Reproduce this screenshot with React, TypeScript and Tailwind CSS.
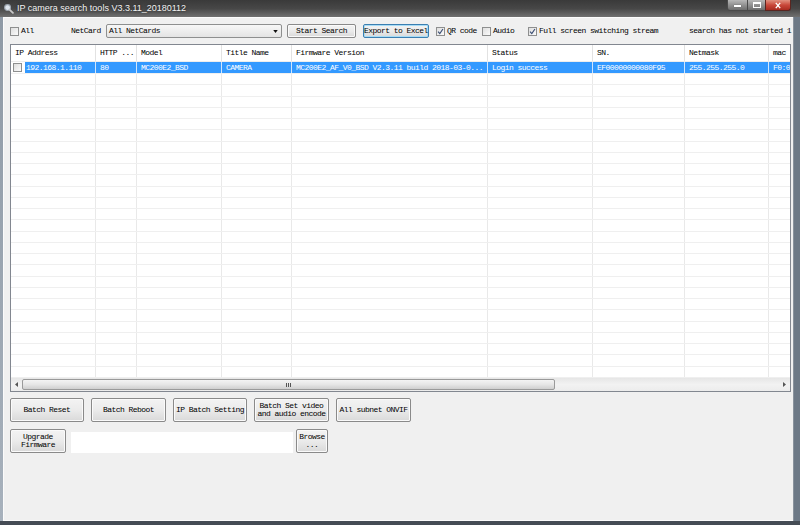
import React from "react";

const COLS = [
  { label: "IP Address", w: "w-[85px]" },
  { label: "HTTP ...", w: "w-[41px]" },
  { label: "Model", w: "w-[85px]" },
  { label: "Title Name", w: "w-[70px]" },
  { label: "Firmware Version", w: "w-[196px]" },
  { label: "Status", w: "w-[105px]" },
  { label: "SN.", w: "w-[92px]" },
  { label: "Netmask", w: "w-[84px]" },
  { label: "mac", w: "w-[21px]" },
];

const ROW = [
  "192.168.1.110",
  "80",
  "MC200E2_BSD",
  "CAMERA",
  "MC200E2_AF_V0_BSD V2.3.11 build 2018-03-0...",
  "Login success",
  "EF00000000080F95",
  "255.255.255.0",
  "F0:0",
];

const EMPTY_ROWS = Array.from({ length: 28 }, (_, i) => i);

function Check({ checked }: { checked?: boolean }) {
  return (
    <span className="flex h-[9px] w-[9px] shrink-0 items-center justify-center border border-[#8e8f8f] bg-gradient-to-br from-[#dedede] to-[#fbfbfb]">
      {checked && (
        <svg viewBox="0 0 8 8" className="h-[7px] w-[7px]">
          <path d="M1.2 4.2 L3.2 6.4 L6.8 1.2" fill="none" stroke="#3b4e74" strokeWidth="1.3" />
        </svg>
      )}
    </span>
  );
}

function Btn({
  className,
  children,
  focused,
}: {
  className: string;
  children: React.ReactNode;
  focused?: boolean;
}) {
  return (
    <div
      className={`flex shrink-0 flex-col items-center justify-center rounded-[2px] border bg-gradient-to-b from-[#f3f3f3] via-[#ebebeb] to-[#d9d9d9] text-center leading-[8px] text-black ${
        focused
          ? "border-[#3c7fb1] shadow-[inset_0_0_0_1px_#a7dcf6]"
          : "border-[#8a8a8a] shadow-[inset_0_0_0_1px_#fafafa]"
      } ${className}`}
    >
      {children}
    </div>
  );
}

function TitleBar() {
  return (
    <div className="flex h-[17px] shrink-0 items-start bg-gradient-to-b from-[#3a3a3a] via-[#474747] to-[#707070]">
      <svg viewBox="0 0 12 12" className="ml-[3px] mt-[3px] h-[11px] w-[11px] shrink-0">
        <circle cx="5" cy="5" r="3.2" fill="#dfe6ee" stroke="#9aa3ad" strokeWidth="1.2" />
        <path d="M7.4 7.4 L10.8 10.8" stroke="#c9c9c9" strokeWidth="2" strokeLinecap="round" />
      </svg>
      <span className="ml-[3px] mt-[2px] font-['Liberation_Sans',sans-serif] text-[9px] leading-[12px] tracking-normal text-[#f2f2f2] [text-shadow:0_0_3px_rgba(0,0,0,0.6)]">
        IP camera search tools V3.3.11_20180112
      </span>
      <div className="ml-auto mr-[9px] flex h-[11px]">
        <div className="flex w-[21px] items-center justify-center rounded-bl-[3px] border border-t-0 border-[#4a4a4a] bg-gradient-to-b from-[#b8b8b8] to-[#6e6e6e]">
          <span className="mt-[2px] h-[2px] w-[7px] bg-white shadow-[0_0_1px_#333]" />
        </div>
        <div className="flex w-[17px] items-center justify-center border-b border-[#4a4a4a] bg-gradient-to-b from-[#b8b8b8] to-[#6e6e6e]">
          <span className="h-[6px] w-[8px] border border-t-2 border-white" />
        </div>
        <div className="flex w-[26px] items-center justify-center rounded-br-[3px] border border-t-0 border-[#5a2520] bg-gradient-to-b from-[#e0907f] via-[#c9483a] to-[#a92b1f]">
          <svg viewBox="0 0 8 8" className="h-[7px] w-[8px]">
            <path d="M1.5 1 L6.5 7 M6.5 1 L1.5 7" stroke="white" strokeWidth="1.6" />
          </svg>
        </div>
      </div>
    </div>
  );
}

function Toolbar() {
  return (
    <div className="mt-[6px] flex h-[14px] shrink-0 items-center whitespace-nowrap">
      <div className="ml-[6px]">
        <Check />
      </div>
      <span className="ml-[2px] w-[50px]">All</span>
      <span className="w-[35px]">NetCard</span>
      <div className="flex h-[14px] w-[176px] shrink-0 items-center rounded-[2px] border border-[#8e8f8f] bg-gradient-to-b from-[#f7f7f7] to-[#e4e4e4] pl-[2px]">
        <span>All NetCards</span>
        <svg viewBox="0 0 6 4" className="ml-auto mr-[3px] h-[3px] w-[5px]">
          <path d="M0 0 L6 0 L3 4 Z" fill="#111" />
        </svg>
      </div>
      <Btn className="ml-[5px] h-[14px] w-[69px]">Start Search</Btn>
      <Btn focused className="ml-[7px] h-[14px] w-[66px]">
        Export to Excel
      </Btn>
      <div className="ml-[7px]">
        <Check checked />
      </div>
      <span className="ml-[2px] w-[35px]">QR code</span>
      <Check />
      <span className="ml-[2px] w-[35px]">Audio</span>
      <Check checked />
      <span className="ml-[2px] w-[150px]">Full screen switching stream</span>
      <span>search has not started 1</span>
    </div>
  );
}

function Grid() {
  return (
    <div className="ml-[6px] mt-[6px] flex h-[348px] w-[781px] shrink-0 flex-col overflow-hidden border border-[#828790] bg-white">
      <div className="flex h-[17px] shrink-0 border-b border-[#ededed]">
        {COLS.map((c, i) => (
          <div
            key={c.label}
            className={`flex shrink-0 items-center pl-[4px] whitespace-nowrap ${c.w} ${
              i < COLS.length - 1 ? "border-r border-[#e2e2e2]" : ""
            }`}
          >
            {c.label}
          </div>
        ))}
      </div>
      <div className="flex-1 overflow-hidden">
        <div className="flex h-[12px] border-b border-[#f0f0f0]">
          {COLS.map((c, i) =>
            i === 0 ? (
              <div key={c.label} className={`flex shrink-0 border-r border-[#cfe5fd] ${c.w}`}>
                <div className="flex w-[14px] shrink-0 items-center pl-[2px]">
                  <Check />
                </div>
                <div className="flex flex-1 items-center bg-[#3399ff] pl-[1px] whitespace-nowrap text-white">
                  {ROW[i]}
                </div>
              </div>
            ) : (
              <div
                key={c.label}
                className={`flex shrink-0 items-center bg-[#3399ff] pl-[4px] whitespace-nowrap text-white ${c.w} ${
                  i < COLS.length - 1 ? "border-r border-[#cfe5fd]" : ""
                }`}
              >
                {ROW[i]}
              </div>
            )
          )}
        </div>
        {EMPTY_ROWS.map((r) => (
          <div key={r} className="flex h-[11.25px] border-b border-[#efefef]">
            {COLS.map((c, i) => (
              <div
                key={c.label}
                className={`shrink-0 ${c.w} ${i < COLS.length - 1 ? "border-r border-[#e9e9e9]" : ""}`}
              />
            ))}
          </div>
        ))}
      </div>
      <div className="flex h-[13px] shrink-0 items-center bg-gradient-to-b from-[#e6e6e6] via-[#f2f2f2] to-[#ececec]">
        <div className="flex w-[11px] shrink-0 items-center justify-center">
          <svg viewBox="0 0 3 5" className="h-[5px] w-[3px]">
            <path d="M3 0 L0 2.5 L3 5 Z" fill="#555" />
          </svg>
        </div>
        <div className="flex h-[11px] w-[533px] shrink-0 items-center justify-center gap-[1px] rounded-[2px] border border-[#9a9a9a] bg-gradient-to-b from-[#f4f4f4] via-[#e6e6e6] to-[#cfcfcf]">
          <span className="h-[4px] w-[1px] bg-[#555]" />
          <span className="h-[4px] w-[1px] bg-[#555]" />
          <span className="h-[4px] w-[1px] bg-[#555]" />
        </div>
        <div className="ml-auto flex w-[11px] shrink-0 items-center justify-center">
          <svg viewBox="0 0 3 5" className="h-[5px] w-[3px]">
            <path d="M0 0 L3 2.5 L0 5 Z" fill="#555" />
          </svg>
        </div>
      </div>
    </div>
  );
}

function Actions() {
  return (
    <>
      <div className="ml-[6px] mt-[6px] flex gap-[7px]">
        <Btn className="h-[24px] w-[74px]">Batch Reset</Btn>
        <Btn className="h-[24px] w-[75px]">Batch Reboot</Btn>
        <Btn className="h-[24px] w-[74px]">IP Batch Setting</Btn>
        <Btn className="h-[24px] w-[75px]">
          <span>Batch Set video</span>
          <span>and audio encode</span>
        </Btn>
        <Btn className="h-[24px] w-[75px]">All subnet ONVIF</Btn>
      </div>
      <div className="ml-[6px] mt-[7px] flex items-start">
        <Btn className="h-[24px] w-[56px]">
          <span>Upgrade</span>
          <span>Firmware</span>
        </Btn>
        <div className="ml-[5px] mt-[3px] h-[21px] w-[222px] shrink-0 bg-white" />
        <Btn className="ml-[3px] h-[24px] w-[32px]">
          <span>Browse</span>
          <span>...</span>
        </Btn>
      </div>
    </>
  );
}

export default function App() {
  return (
    <div className="flex h-[525px] w-[800px] flex-col overflow-hidden bg-[#5d6773]">
      <TitleBar />
      <div className="flex flex-1">
        <div className="w-[3px] shrink-0 bg-gradient-to-b from-[#8f9aa6] to-[#a7b1bc]" />
        <div className="flex w-[790px] shrink-0 flex-col border-l border-t border-b border-[#fbfbfb] bg-[#f0f0f0] font-['Liberation_Mono',monospace] text-[8px] leading-[10px] tracking-[-0.55px] text-black">
          <Toolbar />
          <Grid />
          <Actions />
        </div>
        <div className="flex-1 border-l border-[#8a939d] bg-[#6d7986]" />
      </div>
      <div className="h-[4px] shrink-0 bg-[#454c55]" />
    </div>
  );
}
